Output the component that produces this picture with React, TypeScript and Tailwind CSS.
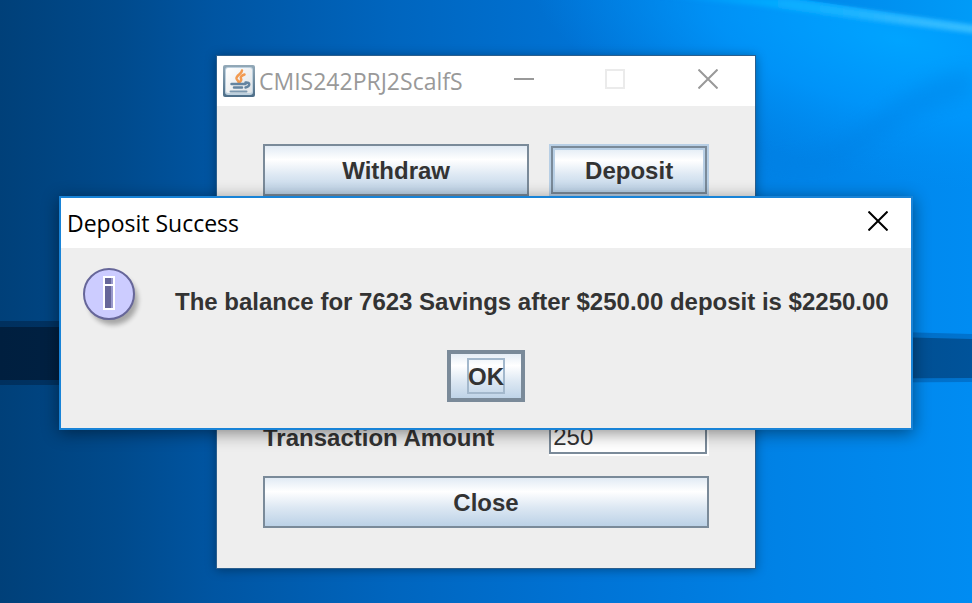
import type { ButtonHTMLAttributes } from "react";

const metalFill =
  "bg-[linear-gradient(to_bottom,#dde8f3_0%,#ffffff_30%,#dde8f3_60%,#b8cfe5_100%)] bg-origin-border";

function MetalButton({ className = "", children, ...rest }: ButtonHTMLAttributes<HTMLButtonElement>) {
  return (
    <button
      type="button"
      className={`flex items-center justify-center border-[#7a8a99] text-[#333333] ${metalFill} ${className}`}
      {...rest}
    >
      {children}
    </button>
  );
}

function Wallpaper() {
  return (
    <svg
      className="absolute inset-0 h-full w-full"
      viewBox="0 0 972 603"
      preserveAspectRatio="none"
      aria-hidden="true"
    >
      <defs>
        <linearGradient id="base" x1="0" y1="0" x2="1" y2="0">
          <stop offset="0" stopColor="#004079" />
          <stop offset="0.12" stopColor="#004a8c" />
          <stop offset="0.22" stopColor="#0055a2" />
          <stop offset="0.4" stopColor="#0065be" />
          <stop offset="0.6" stopColor="#0073d5" />
          <stop offset="0.8" stopColor="#0082e6" />
          <stop offset="1" stopColor="#008cf2" />
        </linearGradient>
        <linearGradient id="bar" x1="0" y1="0" x2="1" y2="0">
          <stop offset="0" stopColor="#001f3f" />
          <stop offset="0.2" stopColor="#002448" />
          <stop offset="1" stopColor="#00539a" />
        </linearGradient>
        <linearGradient id="barEdge" x1="0" y1="0" x2="1" y2="0">
          <stop offset="0" stopColor="#00305e" />
          <stop offset="0.2" stopColor="#00386c" />
          <stop offset="1" stopColor="#0073cf" />
        </linearGradient>
        <radialGradient id="glow" gradientUnits="userSpaceOnUse" cx="0" cy="0" r="1" gradientTransform="translate(900 40) rotate(12) scale(380 140)">
          <stop offset="0" stopColor="#00a4ff" />
          <stop offset="0.5" stopColor="#009aff" stopOpacity="0.7" />
          <stop offset="1" stopColor="#0090f5" stopOpacity="0" />
        </radialGradient>
        <linearGradient id="beam" x1="0" y1="0" x2="1" y2="0">
          <stop offset="0" stopColor="#00a6ff" stopOpacity="0" />
          <stop offset="0.45" stopColor="#08aeff" />
          <stop offset="0.75" stopColor="#2cb8ff" />
          <stop offset="1" stopColor="#38beff" />
        </linearGradient>
        <linearGradient id="sky" x1="0" y1="0" x2="1" y2="0">
          <stop offset="0" stopColor="#0084e8" />
          <stop offset="1" stopColor="#009cf8" />
        </linearGradient>
        <filter id="soft" x="-20%" y="-60%" width="140%" height="220%">
          <feGaussianBlur stdDeviation="2" />
        </filter>
        <filter id="haze" x="-30%" y="-60%" width="160%" height="220%">
          <feGaussianBlur stdDeviation="9" />
        </filter>
      </defs>
      <rect width="972" height="603" fill="url(#base)" />
      <rect width="972" height="603" fill="url(#glow)" />
      <path d="M760 150 Q810 170 870 120 T972 70 L972 95 Q900 120 860 150 T770 165 Z" fill="#007ee0" opacity="0.35" filter="url(#haze)" />
      <path d="M780 -4 L980 -4 L980 25 Q880 12 780 -4 Z" fill="url(#sky)" />
      <path d="M640 -6 L790 -1 Q880 12 980 26 L980 34 Q850 18 760 6 Z" fill="url(#beam)" filter="url(#soft)" />
      <path d="M0 321 H500 L972 334 V382 L500 385 H0 Z" fill="url(#barEdge)" />
      <path d="M0 327 H500 L972 339 V378 L500 380 H0 Z" fill="url(#bar)" />
    </svg>
  );
}

function JavaIcon() {
  return (
    <svg className="h-8 w-8 shrink-0" viewBox="0 0 32 32" aria-hidden="true">
      <defs>
        <linearGradient id="jframe" x1="0" y1="0" x2="0" y2="1">
          <stop offset="0" stopColor="#93a9b8" />
          <stop offset="1" stopColor="#4c6d88" />
        </linearGradient>
        <linearGradient id="jface" x1="0" y1="0" x2="1" y2="1">
          <stop offset="0" stopColor="#ffffff" />
          <stop offset="1" stopColor="#dfe3e6" />
        </linearGradient>
      </defs>
      <rect width="32" height="32" rx="2" fill="url(#jframe)" />
      <rect x="2" y="2" width="28" height="28" rx="3" fill="#bdd0de" />
      <rect x="3" y="3" width="26" height="25" rx="2" fill="url(#jface)" />
      <path d="M19 5.500c0 3.500-6 4.500-5.500 8 .3 1.500 1.700 2 2 3.500M21.500 9.500c-3 1.200-4.500 2.500-3.500 4.200.7 1.200.1 2.100-1 3" fill="none" stroke="#f29a50" strokeWidth="2.500" strokeLinecap="round" />
      <path d="M8.500 19h14M11 22.500h8M22.500 17.500c5-.8 5 4 0 5" fill="none" stroke="#6484a0" strokeWidth="2.500" strokeLinecap="round" />
      <path d="M7.500 26.500h16" fill="none" stroke="#7d99b0" strokeWidth="2" strokeLinecap="round" />
    </svg>
  );
}

function InfoIcon() {
  return (
    <svg className="h-16 w-16 shrink-0" viewBox="0 0 64 64" role="img" aria-label="Information">
      <defs>
        <filter id="drop" x="-30%" y="-30%" width="160%" height="160%">
          <feGaussianBlur stdDeviation="2.500" />
        </filter>
      </defs>
      <circle cx="30" cy="32" r="25" fill="#000000" opacity="0.3" filter="url(#drop)" />
      <circle cx="26" cy="26" r="25" fill="#ccccff" stroke="#666699" strokeWidth="2" />
      <path d="M20 8h12v34H20z" fill="#ffffff" />
      <path d="M22 10h8v6h-8zM22 18h8v22h-8z" fill="#666699" />
      <path d="M28 10h2v6h-2zM28 18h2v22h-2z" fill="#9999cc" />
    </svg>
  );
}

function CrossIcon() {
  return (
    <svg className="h-5 w-5" viewBox="0 0 20 20" fill="none" stroke="currentColor" strokeWidth="2" aria-hidden="true">
      <path d="M0.500 0.500 19.500 19.500M19.500 0.500 0.500 19.500" />
    </svg>
  );
}

function MainWindow() {
  return (
    <section
      aria-label="CMIS242PRJ2ScalfS"
      className="absolute top-[55px] left-[216px] flex w-[540px] flex-col border border-[#2b5f8e] bg-[#eeeeee] shadow-[0_1px_10px_rgba(0,0,0,0.35)]"
    >
      <header className="flex h-[50px] items-center bg-white pl-1.5 text-[#999999]">
        <JavaIcon />
        <h1 className="ml-1 flex-1 font-['Open_Sans','Noto_Sans',sans-serif] text-[23px] leading-8 font-normal">
          CMIS242PRJ2ScalfS
        </h1>
        <div className="flex h-full items-center pb-1">
          <button type="button" aria-label="Minimize" className="flex h-full w-[90px] items-center justify-center">
            <span className="h-0.5 w-5 bg-[#999999]" />
          </button>
          <button type="button" aria-label="Maximize" disabled className="flex h-full w-[92px] items-center justify-center">
            <span className="h-5 w-5 border-2 border-[#ebebeb]" />
          </button>
          <button type="button" aria-label="Close window" className="flex h-full w-[94px] items-center justify-center">
            <CrossIcon />
          </button>
        </div>
      </header>

      <div className="px-[46px] pt-[38px] pb-10 text-2xl font-bold text-[#333333]">
        <div className="grid grid-cols-[5fr_3fr] gap-x-5">
          <MetalButton className="h-[52px] border-2 pt-0.5">Withdraw</MetalButton>
          <div className="border-2 border-[#b8cfe5]">
            <MetalButton className="h-12 w-full border-2 pt-0.5 shadow-[inset_0_0_0_2px_#b8cfe5]">Deposit</MetalButton>
          </div>
        </div>
        <div className="mt-56 grid grid-cols-[5fr_3fr] items-center gap-x-5">
          <label htmlFor="amount" className="leading-9">
            Transaction Amount
          </label>
          <div className="border-r-2 border-b-2 border-white">
            <input
              id="amount"
              type="text"
              defaultValue="250"
              className="block h-[34px] w-full border-2 border-[#7a8a99] bg-white px-0.5 text-2xl font-normal outline-none"
            />
          </div>
        </div>
        <MetalButton className="mt-5 h-[52px] w-full border-2 pt-0.5">Close</MetalButton>
      </div>
    </section>
  );
}

function SuccessDialog() {
  return (
    <section
      role="dialog"
      aria-labelledby="dialog-title"
      className="absolute top-[196px] left-[59px] flex w-[854px] flex-col border-2 border-[#1883d7] bg-[#eeeeee] shadow-[0_3px_16px_rgba(0,0,0,0.45)]"
    >
      <header className="flex h-[50px] items-center justify-between bg-white pl-1.5 text-black">
        <h2 id="dialog-title" className="font-['Open_Sans','Noto_Sans',sans-serif] text-[23px] leading-8 font-normal">
          Deposit Success
        </h2>
        <button type="button" aria-label="Close dialog" className="mr-[23px] mb-1">
          <CrossIcon />
        </button>
      </header>
      <div className="flex px-[22px] pt-5">
        <InfoIcon />
        <p className="ml-7 pt-[18px] text-2xl leading-8 font-bold whitespace-nowrap text-[#333333]">
          The balance for 7623 Savings after $250.00 deposit is $2250.00
        </p>
      </div>
      <div className="flex justify-center pt-[18px] pb-[26px]">
        <MetalButton className="h-[52px] w-[78px] border-4 text-2xl font-bold">
          <span className="flex h-9 w-[38px] items-center justify-center border-2 border-[#a3b8cc] pt-0.5">OK</span>
        </MetalButton>
      </div>
    </section>
  );
}

export default function App() {
  return (
    <main className="relative h-screen w-full overflow-hidden bg-[#0065be] font-['Liberation_Sans',Arial,sans-serif]">
      <Wallpaper />
      <MainWindow />
      <SuccessDialog />
    </main>
  );
}
